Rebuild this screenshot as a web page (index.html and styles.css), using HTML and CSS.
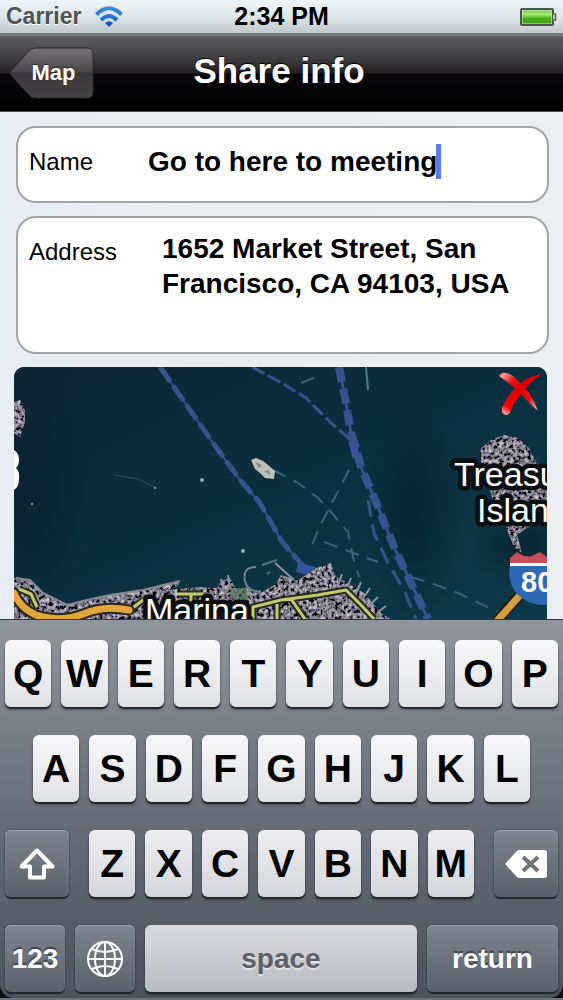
FILE: index.html
```
<!DOCTYPE html>
<html lang="en">
<head>
  <meta charset="UTF-8" />
  <meta name="viewport" content="width=device-width, initial-scale=1.0" />
  <title>Share info</title>
  <link rel="stylesheet" href="styles.css">
</head>
<body>
  <div class="status-bar">
    <div class="carrier">
      <span>Carrier</span>
      <svg class="wifi" viewBox="0 0 28 21" aria-hidden="true">
        <defs>
          <linearGradient id="wifiFill" x1="0" y1="0" x2="0" y2="21" gradientUnits="userSpaceOnUse">
            <stop offset="0" stop-color="#3b93e6" />
            <stop offset="1" stop-color="#0b55c4" />
          </linearGradient>
        </defs>
        <g fill="none" stroke="url(#wifiFill)" stroke-width="4">
          <path d="M1.500 8.500Q14-4 26.500 8.500" />
          <path d="M6 14Q14 6 22 14" />
        </g>
        <path d="M10 17Q14 13.500 18 17L14 21Z" fill="#0b55c4" />
      </svg>
    </div>
    <time class="time">2:34 PM</time>
    <svg class="battery" viewBox="0 0 37 18" aria-label="Battery full">
      <defs>
        <linearGradient id="batteryFill" x1="0" y1="0" x2="0" y2="1">
          <stop offset="0" stop-color="#7fd048" />
          <stop offset="0.300" stop-color="#a5ee74" />
          <stop offset="0.600" stop-color="#48b318" />
          <stop offset="1" stop-color="#3c9d10" />
        </linearGradient>
      </defs>
      <rect x="1" y="1" width="32" height="16" rx="1" fill="#d6e6d0" stroke="#4a5550" stroke-width="2" />
      <rect x="2.500" y="2.500" width="29" height="13" fill="url(#batteryFill)" />
      <path d="M33 6h2.500v6H33" fill="#c8d0d0" stroke="#59625f" stroke-width="1.500" />
    </svg>
  </div>

  <header class="nav-bar">
    <button class="back-btn" type="button">
      <svg class="back-shape" viewBox="0 0 85 52" preserveAspectRatio="none" aria-hidden="true">
        <defs>
          <linearGradient id="backFill" x1="0" y1="0" x2="0" y2="1">
            <stop offset="0" stop-color="#757374" />
            <stop offset="0.480" stop-color="#49474a" />
            <stop offset="0.500" stop-color="#3a383b" />
            <stop offset="1" stop-color="#454346" />
          </linearGradient>
        </defs>
        <path d="M26 1H78Q84 1 84 7V45Q84 51 78 51H26Q22 51 19 47L2 28Q0 26 2 24L19 5Q22 1 26 1Z" fill="url(#backFill)" stroke="#2b292b" />
      </svg>
      <span>Map</span>
    </button>
    <h1>Share info</h1>
  </header>

  <main class="content">
    <form class="fields">
      <div class="field">
        <label for="name">Name</label>
        <div class="name-entry">
          <input id="name" type="text" value="Go to here to meeting" autocomplete="off" spellcheck="false">
          <span class="caret"></span>
        </div>
      </div>
      <div class="field address-field">
        <label for="address">Address</label>
        <textarea id="address" rows="3" spellcheck="false">1652 Market Street, San Francisco, CA 94103, USA</textarea>
      </div>
    </form>

    <section class="map" aria-label="Map preview">
      <svg class="map-image" viewBox="0 0 533 252" preserveAspectRatio="xMinYMin slice">
        <defs>
          <linearGradient id="water" x1="0" y1="0" x2="1" y2="1">
            <stop offset="0" stop-color="#0e2635" />
            <stop offset="0.500" stop-color="#0b2f40" />
            <stop offset="1" stop-color="#0c3a48" />
          </linearGradient>
          <radialGradient id="shade">
            <stop offset="0" stop-color="#08202c" stop-opacity="0.700" />
            <stop offset="1" stop-color="#08202c" stop-opacity="0" />
          </radialGradient>
          <filter id="ground" x="0" y="0" width="100%" height="100%">
            <feTurbulence type="fractalNoise" baseFrequency="0.280" numOctaves="3" seed="4" />
            <feColorMatrix values="1.300 0 0 0 -0.440  1.250 0.050 0 0 -0.450  1.300 0 0.050 0 -0.430  0 0 0 0 1" />
            <feComposite in2="SourceGraphic" operator="in" />
          </filter>
        </defs>
        <rect width="533" height="252" fill="url(#water)" />
        <ellipse cx="20" cy="120" rx="60" ry="130" fill="url(#shade)" />
        <ellipse cx="400" cy="150" rx="50" ry="110" fill="url(#shade)" />
        <ellipse cx="510" cy="180" rx="55" ry="45" fill="url(#shade)" />

        <!-- ferry routes -->
        <g fill="none" stroke="#36528f" stroke-width="3">
          <path d="M146 0L176 43L199 76L226 113L246 136L268 175L292 202" stroke-width="2" />
          <path d="M146 0L176 43L199 76L226 113L246 136L268 175L292 202" stroke-width="5" stroke-dasharray="18 5" />
          <path d="M238 0L268 16L292 31L317 56L337 73" stroke-dasharray="14 4" />
          <path d="M325 0L332 36L337 66L342 81L347 100L364 140L380 180L397 216L414 252" />
          <path d="M325 0L332 36L337 66L342 81L347 100L364 140L380 180L397 216L414 252" stroke-width="8" stroke-dasharray="15 7" />
          <path d="M354 133L360 166L374 196L390 223L402 252" stroke-dasharray="17 8" />
        </g>
        <path d="M334 74l12 4l-7 14z" fill="#3f4fa0" />
        <path d="M284 196l18 4l-8 8l-12-3z" fill="#34549f" />
        <g fill="none" stroke="#3d607c" stroke-width="2" stroke-dasharray="14 9">
          <path d="M259 103L284 116L304 131L317 145L334 165L339 190L345 210" />
          <path d="M335 103L322 128L304 163L295 186" />
          <path d="M310 175L337 185L364 195" />
          <path d="M397 210L417 216L444 226L486 246" />
          <path d="M287 16L305 9" />
        </g>
        <path d="M352 0L354 23" stroke="#4c7e86" stroke-width="2" />
        <path d="M100 108L124 112L141 120M330 162l4 3l2-6" fill="none" stroke="#2a5360" />
        <g fill="#8fb0b5">
          <circle cx="188" cy="113" r="2" />
          <circle cx="229" cy="184" r="2" />
          <circle cx="141" cy="121" r="1" />
          <circle cx="18" cy="137" r="1" />
        </g>

        <!-- Alcatraz -->
        <path d="M237 93L242 91L249 94L254 98L261 104L260 112L251 111L246 106L241 102Z" fill="#bcc0b6" />
        <path d="M241 95l7 3l-3 3zM250 104l5-1l1 5z" fill="#858c84" />

        <!-- west shore -->
        <path d="M0 35L6 33L11 43L11 55L6 70L0 66Z" fill="#555" filter="url(#ground)" />
        <path d="M0 83Q5 86 5 93Q5 98 2 101Q6 105 5 112Q5 120 0 123Z" fill="#fff" />

        <!-- city -->
        <path d="M0 211L16 213L29 226L53 238L73 233L96 228L129 223L166 214L164 219L153 223L186 220L203 221L208 213L216 211L222 222L233 220L238 226L250 224L262 217L267 208L284 213L304 200L317 196L322 210L334 216L350 226L367 246L377 252H0Z" fill="#777" filter="url(#ground)" />
        <path d="M2 211L16 213L29 226L53 238L73 233L96 228L129 223L166 214" fill="none" stroke="#858990" stroke-width="2" />
        <path d="M242 200Q228 200 231 214Q234 226 247 224" fill="none" stroke="#738393" stroke-width="2" />
        <path d="M248 198L263 193M253 207l3-2" stroke="#57737d" stroke-width="2" />
        <path d="M261 196L280 213M207 212l3 12M214 208l2 14M328 207l-4 12M337 211l-5 13M347 215l-6 14M356 221l-8 12M364 230l-9 9M372 239l-9 7" stroke="#8d929e" stroke-width="2" />
        <path d="M216 221h17v12h-17z" fill="#49704b" opacity="0.600" />
        <g fill="none" stroke-linejoin="round">
          <path d="M5 222L17 227L23 240M116 243L129 233M163 227H189M177 227V252M239 252V240L267 233L304 228L332 223L347 238L360 252M277 232L291 252M263 237V252" stroke="#252b21" stroke-width="7" />
          <path d="M5 222L17 227L23 240M116 243L129 233M163 227H189M177 227V252M239 252V240L267 233L304 228L332 223L347 238L360 252M277 232L291 252M263 237V252" stroke="#c5cb6c" stroke-width="3" />
          <path d="M0 226Q6 241 22 248Q45 256 69 247Q90 238 115 243" stroke="#2c261c" stroke-width="11" stroke-linecap="round" />
          <path d="M0 226Q6 241 22 248Q45 256 69 247Q90 238 115 243" stroke="#e2a73b" stroke-width="7" stroke-linecap="round" />
        </g>

        <!-- Treasure Island -->
        <path d="M466 92L467 81L477 73L490 68L504 71L515 81L522 95L533 123V145L515 160L503 168L508 186L500 180L492 160L478 130L473 110Z" fill="#888" filter="url(#ground)" />
        <path d="M482 255L508 226" stroke="#242019" stroke-width="11" />
        <path d="M482 255L508 226" stroke="#d99f3e" stroke-width="7" />
        <path d="M496 196V191L503 185Q511 191 518 189L526 185L533 190V196Z" fill="#c9505a" />
        <path d="M496 196H533V199H496Z" fill="#fff" />
        <path d="M496 199H533V238Q515 239 503 227Q493 215 496 199Z" fill="#2f68b5" />
        <text class="shield-text" x="507" y="225">80</text>
        <g class="place">
          <text x="440" y="119">Treasure</text>
          <text x="463" y="155">Island</text>
          <text x="131" y="255">Marina</text>
        </g>
      </svg>
      <button class="remove-btn" type="button" aria-label="Remove map">
        <svg viewBox="0 0 46 46" aria-hidden="true">
          <defs>
            <radialGradient id="cross" cx="23" cy="19" r="29" gradientUnits="userSpaceOnUse">
              <stop offset="0" stop-color="#e00" />
              <stop offset="0.450" stop-color="#e31515" />
              <stop offset="0.800" stop-color="#f5a09a" />
              <stop offset="1" stop-color="#f02a20" />
            </radialGradient>
            <linearGradient id="crossDown" x1="25" y1="14" x2="8" y2="43" gradientUnits="userSpaceOnUse">
              <stop offset="0" stop-color="#d80000" />
              <stop offset="0.800" stop-color="#f00505" />
              <stop offset="1" stop-color="#ff9c94" />
            </linearGradient>
          </defs>
          <path d="M1 5Q3 1 8 2Q15 3 19 9Q27 16 32 23Q37 31 40 40Q31 32 25 25Q13 13 1 5Z" fill="url(#cross)" />
          <path d="M45 3Q34 9 27 18Q17 29 13 39Q12 44 8 44Q3 43 4 37Q11 20 25 10Q34 4 45 3Z" fill="url(#crossDown)" />
        </svg>
      </button>
    </section>
  </main>

  <div class="keyboard">
    <div class="row">
      <button class="key" type="button">Q</button>
      <button class="key" type="button">W</button>
      <button class="key" type="button">E</button>
      <button class="key" type="button">R</button>
      <button class="key" type="button">T</button>
      <button class="key" type="button">Y</button>
      <button class="key" type="button">U</button>
      <button class="key" type="button">I</button>
      <button class="key" type="button">O</button>
      <button class="key" type="button">P</button>
    </div>
    <div class="row row-middle">
      <button class="key" type="button">A</button>
      <button class="key" type="button">S</button>
      <button class="key" type="button">D</button>
      <button class="key" type="button">F</button>
      <button class="key" type="button">G</button>
      <button class="key" type="button">H</button>
      <button class="key" type="button">J</button>
      <button class="key" type="button">K</button>
      <button class="key" type="button">L</button>
    </div>
    <div class="row row-shift">
      <button class="key key-dark key-side" type="button" aria-label="Shift">
        <svg class="shift-icon" viewBox="0 0 36 32" aria-hidden="true">
          <path d="M18 2.500L33.500 18.500H25V29.500H11V18.500H2.500Z" fill="none" stroke="#fff" stroke-width="4" stroke-linejoin="round" />
        </svg>
      </button>
      <div class="letters">
        <button class="key" type="button">Z</button>
        <button class="key" type="button">X</button>
        <button class="key" type="button">C</button>
        <button class="key" type="button">V</button>
        <button class="key" type="button">B</button>
        <button class="key" type="button">N</button>
        <button class="key" type="button">M</button>
      </div>
      <button class="key key-dark key-side" type="button" aria-label="Delete">
        <svg class="delete-icon" viewBox="0 0 42 28" aria-hidden="true">
          <path d="M14 0H39Q42 0 42 3V25Q42 28 39 28H14Q12 28 11 26L1 15Q0 14 1 13L11 2Q12 0 14 0Z" fill="#fff" />
          <path d="M18 7L33 21M33 7L18 21" stroke="#707680" stroke-width="4" />
        </svg>
      </button>
    </div>
    <div class="row">
      <button class="key key-dark key-word key-small" type="button">123</button>
      <button class="key key-dark key-small" type="button" aria-label="Next keyboard">
        <svg class="globe-icon" viewBox="0 0 36 36" aria-hidden="true">
          <g fill="none" stroke="#fff" stroke-width="2">
            <circle cx="18" cy="18" r="17" />
            <ellipse cx="18" cy="18" rx="10" ry="17" />
            <path d="M18 1V35M1 18H35M5 8Q18 14 31 8M5 28Q18 22 31 28" />
          </g>
        </svg>
      </button>
      <button class="key key-word key-space" type="button">space</button>
      <button class="key key-dark key-word key-return" type="button">return</button>
    </div>
  </div>
</body>
</html>
```
FILE: styles.css
```
* {
  box-sizing: border-box;
  margin: 0;
  padding: 0;
}

body {
  display: flex;
  flex-direction: column;
  min-height: 100vh;
  font-family: "Liberation Sans", Arial, sans-serif;
  background-color: #0c0e11;
  border-bottom: 2px solid #6d737b;
  color: #000;
}

button,
input,
textarea {
  font-family: inherit;
  border: none;
}

button {
  cursor: pointer;
}

/* Status bar */
.status-bar {
  display: grid;
  grid-template-columns: 1fr auto 1fr;
  align-items: center;
  height: 33px;
  padding: 0 6px;
  background: linear-gradient(#eef5f8, #dfe6e9 50%, #c0c8cb);
}

.carrier {
  display: flex;
  align-items: center;
  gap: 14px;
  font-size: 23px;
  font-weight: bold;
  color: #4e5355;
  text-shadow: 0 1px 0 #fff;
}

.wifi {
  width: 28px;
  height: 21px;
}

.time {
  font-size: 25px;
  font-weight: bold;
}

.battery {
  justify-self: end;
  width: 37px;
  height: 18px;
}

/* Navigation bar */
.nav-bar {
  display: grid;
  grid-template-columns: 1fr auto 1fr;
  align-items: center;
  height: 79px;
  padding: 0 14px 2px 9px;
  background: linear-gradient(#5f5f61, #3a383b 25px, #201e21 37px, #08070a 38px, #000);
  border-top: 3px solid #777b7d;
  border-bottom: 1px solid #4e4e50;
}

.nav-bar h1 {
  padding-bottom: 4px;
  font-size: 35px;
  line-height: 40px;
  color: #fff;
  text-shadow: 0 -1px 1px #000;
}

.back-btn {
  position: relative;
  width: 85px;
  height: 52px;
  padding-left: 4px;
  background: none;
  color: #fff;
  font-size: 22px;
  font-weight: bold;
  text-shadow: 0 -1px 1px #222;
}

.back-shape {
  position: absolute;
  top: 0;
  left: 0;
  width: 100%;
  height: 100%;
}

.back-btn span {
  position: relative;
}

/* Form */
.content {
  flex: 1;
  display: flex;
  flex-direction: column;
  gap: 13px;
  padding: 14px 16px 0 14px;
  background: linear-gradient(90deg, #e8ecf5, #e9edf0 30%, #ebeff1);
}

.fields {
  display: flex;
  flex-direction: column;
  gap: 13px;
  margin: 0 -2px 0 2px;
}

.field {
  display: flex;
  padding: 16px 12px 0 11px;
  min-height: 77px;
  background-color: #fff;
  border: 2px solid #a2a4a6;
  border-radius: 20px;
}

.field label {
  width: 119px;
  font-size: 24px;
  line-height: 35px;
}

.name-entry {
  display: flex;
  height: 35px;
}

.field input,
.field textarea {
  background: none;
  outline: none;
  font-size: 28px;
  font-weight: bold;
  line-height: 35px;
}

.field input {
  width: 290px;
  field-sizing: content;
  height: 35px;
  caret-color: transparent;
}

.caret {
  width: 5px;
  height: 35px;
  margin-left: -2px;
  background-color: #587cf0;
}

.address-field {
  padding-top: 13px;
  min-height: 138px;
}

.address-field label {
  width: 133px;
  padding-top: 3px;
}

.address-field textarea {
  flex: 1;
  min-width: 0;
  resize: none;
  overflow: hidden;
}

/* Map */
.map {
  position: relative;
  flex: 1;
  display: flex;
  min-height: 252px;
  overflow: hidden;
  border-radius: 10px 10px 0 0;
  background-color: #0b2f40;
}

.map-image {
  flex: 1;
  width: 100%;
}

.place text {
  font-size: 34px;
  fill: #fff;
  stroke: #0b0f12;
  stroke-width: 9px;
  stroke-linejoin: round;
  paint-order: stroke;
}

.shield-text {
  font-size: 29px;
  font-weight: bold;
  fill: #fff;
}

.remove-btn {
  position: absolute;
  top: 4px;
  right: 3px;
  width: 46px;
  height: 46px;
  background: none;
}

.remove-btn svg {
  display: block;
}

/* Keyboard */
.keyboard {
  display: flex;
  flex-direction: column;
  gap: 28px;
  padding: 20px 5px 6px;
  background: linear-gradient(#90959d, #7b828c 25%, #656c78 55%, #4b535f);
  border-top: 1px solid #33383f;
  border-radius: 0 0 14px 14px;
}

.row {
  display: flex;
  gap: 10px;
}

.row-middle {
  padding: 0 28px;
}

.row-shift {
  gap: 20px;
}

.letters {
  flex: 1;
  display: flex;
  gap: 10px;
}

.key {
  display: flex;
  flex: 1;
  align-items: center;
  justify-content: center;
  min-width: 0;
  height: 67px;
  background: linear-gradient(#f8f8fa, #e0e1e5);
  border-radius: 6px;
  box-shadow: 0 2px 1px #20242b, 0 3px 3px rgba(0, 0, 0, 0.3);
  color: #000;
  font-size: 39px;
  font-weight: bold;
}

.letters .key {
  background: linear-gradient(#ededf0, #d5d6db);
}

.key-word {
  font-size: 28px;
}

.key-dark {
  background: linear-gradient(#7f8590, #59616c);
  box-shadow: inset 0 1px 1px #a0a6b0, 0 2px 1px #20242b, 0 0 2px #343a44;
  color: #fff;
  text-shadow: 0 -2px 1px #3b424c;
}

.key-side {
  flex: 0 0 64px;
}

.key-small {
  flex: 0 0 60px;
}

.key-return {
  flex: 0 0 131px;
}

.key-space {
  background: linear-gradient(#d9dade, #b9bbc3);
  color: #5d6068;
  text-shadow: 0 2px 0 #dfe0e4;
}

.shift-icon {
  width: 36px;
  height: 32px;
}

.delete-icon {
  width: 42px;
  height: 28px;
}

.globe-icon {
  width: 36px;
  height: 36px;
}
```
